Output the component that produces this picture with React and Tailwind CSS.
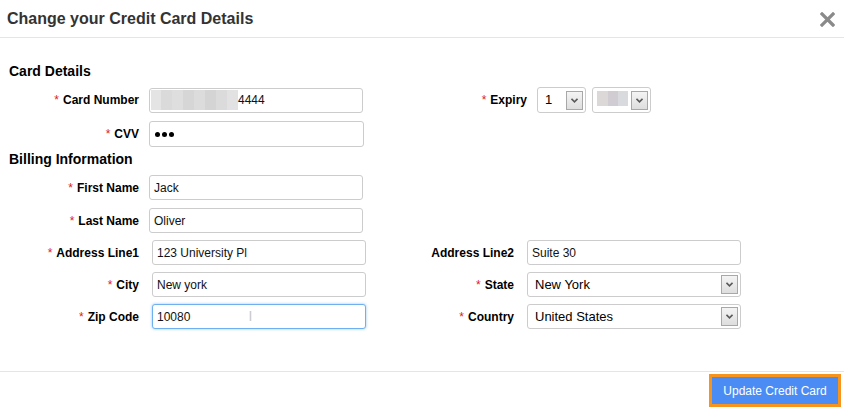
import clsx from "clsx";

// Small required-field label, right aligned
const Label = ({ req, className, children }) => (
  <div className={clsx("text-right text-[12px] font-bold text-black shrink-0", className)}>
    {req && <span className="text-[#e02020] font-normal mr-[4px]">*</span>}
    {children}
  </div>
);

const Field = ({ focus, className, children }) => (
  <div
    className={clsx(
      "flex items-center border rounded-[3px] bg-white text-[12px] text-[#111] pl-[4px] shrink-0 overflow-hidden",
      focus
        ? "border-[#6fb1f0] shadow-[0_0_3px_rgba(102,175,233,0.7)]"
        : "border-[#cccccc]",
      className
    )}
  >
    {children}
  </div>
);

const Arrow = () => (
  <div className="w-[17px] h-[19px] shrink-0 border border-[#a8a8a8] bg-linear-to-b from-[#f4f4f4] to-[#dedede] flex items-center justify-center">
    <svg width="7" height="5" viewBox="0 0 7 5">
      <path d="M0.5 0.8 L3.5 3.8 L6.5 0.8" fill="none" stroke="#5a5a5a" strokeWidth="1.6" />
    </svg>
  </div>
);

const Select = ({ className, children }) => (
  <div
    className={clsx(
      "flex items-center border border-[#cccccc] rounded-[3px] bg-white pl-[7px] pr-[2px] text-[13px] text-black shrink-0",
      className
    )}
  >
    <div className="flex-1 flex items-center">{children}</div>
    <Arrow />
  </div>
);

const App = () => {
  return (
    <div className="w-[844px] h-[408px] bg-white flex flex-col font-['Liberation_Sans',Arial,sans-serif] overflow-hidden">
      {/* Header */}
      <div className="h-[38px] shrink-0 border-b border-[#e5e5e5] flex items-center justify-between pl-[7px] pr-[9px]">
        <h1 className="text-[16px] font-bold text-[#333]">Change your Credit Card Details</h1>
        <svg width="15" height="15" viewBox="0 0 15 15" className="mt-[1px]">
          <path d="M2 2 L13 13 M13 2 L2 13" stroke="#8a8a8a" strokeWidth="3.2" strokeLinecap="square" />
        </svg>
      </div>

      {/* Body */}
      <div className="flex-1 flex flex-col">
        <h2 className="mt-[25px] pl-[9px] text-[14px] leading-[16px] font-bold text-black">Card Details</h2>

        {/* Card number + expiry */}
        <div className="mt-[8px] flex items-center">
          <div className="w-[420px] flex items-center pl-[9px]">
            <Label req className="w-[130px] mr-[10px]">Card Number</Label>
            <Field className="w-[214px] h-[25px] !pl-0">
              <div className="flex h-[20px] w-[87px] ml-[1px]">
                <div className="w-[10px] bg-[#e4e4e4]" />
                <div className="w-[11px] bg-[#dadada]" />
                <div className="w-[11px] bg-[#dedede]" />
                <div className="w-[11px] bg-[#d6d6d6]" />
                <div className="w-[11px] bg-[#dcdcdc]" />
                <div className="w-[11px] bg-[#d4d4d4]" />
                <div className="w-[11px] bg-[#dbdbdb]" />
                <div className="w-[11px] bg-[#e2e2e2]" />
              </div>
              <span>4444</span>
            </Field>
          </div>
          <div className="flex items-center">
            <Label req className="w-[107px] mr-[10px]">Expiry</Label>
            <Select className="w-[49px] h-[26px]">1</Select>
            <Select className="w-[59px] h-[26px] ml-[6px] !pl-[4px]">
              <div className="flex h-[15px] -mt-[4px]">
                <div className="w-[11px] bg-[#dcd8d8]" />
                <div className="w-[10px] bg-[#d1ccd1]" />
                <div className="w-[10px] bg-[#d8dadd]" />
              </div>
            </Select>
          </div>
        </div>

        {/* CVV */}
        <div className="mt-[8px] flex items-center pl-[9px]">
          <Label req className="w-[130px] mr-[10px]">CVV</Label>
          <Field className="w-[215px] h-[26px]">
            <div className="flex gap-[2px] ml-[1px]">
              <span className="w-[5px] h-[5px] rounded-full bg-black" />
              <span className="w-[5px] h-[5px] rounded-full bg-black" />
              <span className="w-[5px] h-[5px] rounded-full bg-black" />
            </div>
          </Field>
        </div>

        <h2 className="mt-[4px] pl-[9px] text-[14px] leading-[16px] font-bold text-black">Billing Information</h2>

        {/* First name */}
        <div className="mt-[8px] flex items-center pl-[9px]">
          <Label req className="w-[130px] mr-[10px]">First Name</Label>
          <Field className="w-[214px] h-[25px]">Jack</Field>
        </div>

        {/* Last name */}
        <div className="mt-[8px] flex items-center pl-[9px]">
          <Label req className="w-[130px] mr-[10px]">Last Name</Label>
          <Field className="w-[214px] h-[25px]">Oliver</Field>
        </div>

        {/* Address */}
        <div className="mt-[7px] flex items-center">
          <div className="w-[420px] flex items-center pl-[9px]">
            <Label req className="w-[130px] mr-[13px]">Address Line1</Label>
            <Field className="w-[214px] h-[25px]">123 University Pl</Field>
          </div>
          <div className="flex items-center">
            <Label className="w-[94px] mr-[13px]">Address Line2</Label>
            <Field className="w-[214px] h-[25px]">Suite 30</Field>
          </div>
        </div>

        {/* City / State */}
        <div className="mt-[7px] flex items-center">
          <div className="w-[420px] flex items-center pl-[9px]">
            <Label req className="w-[130px] mr-[13px]">City</Label>
            <Field className="w-[214px] h-[25px]">New york</Field>
          </div>
          <div className="flex items-center">
            <Label req className="w-[94px] mr-[13px]">State</Label>
            <Select className="w-[214px] h-[25px]">New York</Select>
          </div>
        </div>

        {/* Zip / Country */}
        <div className="mt-[7px] flex items-center">
          <div className="w-[420px] flex items-center pl-[9px]">
            <Label req className="w-[130px] mr-[13px]">Zip Code</Label>
            <Field focus className="w-[214px] h-[25px]">
              <span>10080</span>
              <span className="ml-[58px] text-[#c8c8c8] text-[14px] font-light">I</span>
            </Field>
          </div>
          <div className="flex items-center">
            <Label req className="w-[94px] mr-[13px]">Country</Label>
            <Select className="w-[214px] h-[25px]">United States</Select>
          </div>
        </div>
      </div>

      {/* Footer */}
      <div className="h-[37px] shrink-0 border-t border-[#e5e5e5] flex justify-end items-start pt-[2px] pr-[3px]">
        <button
          type="button"
          className="w-[132px] h-[33px] border-[3px] border-[#f7941d] bg-[#4b8cf4] text-white text-[12px] flex items-center justify-center"
        >
          Update Credit Card
        </button>
      </div>
    </div>
  );
};

export default App;
